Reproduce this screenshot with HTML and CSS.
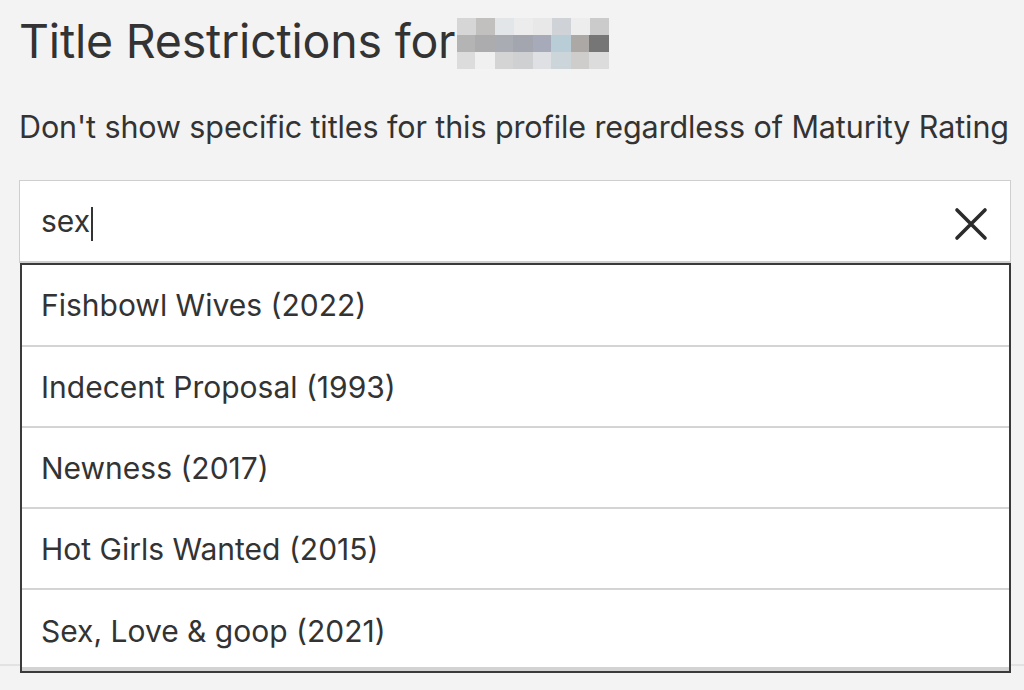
FILE: index.html
```html
<!DOCTYPE html>
<html lang="en">
<head>
    <meta charset="UTF-8">
    <meta name="viewport" content="width=device-width, initial-scale=1.0">
    <title>Title Restrictions</title>
    <link rel="stylesheet" href="styles.css">
</head>
<body>
    <div class="page">
        <h1 class="title">Title Restrictions for <span class="blurred" aria-label="profile name"><i></i><i></i><i></i><i></i><i></i><i></i><i></i><i></i></span></h1>
        <p class="subtitle">Don't show specific titles for this profile regardless of Maturity Rating</p>

        <div class="search">
            <div class="search-box">
                <span class="query">sex</span><span class="caret"></span>
                <button class="clear" aria-label="Clear">
                    <svg width="34" height="34" viewBox="0 0 34 34">
                        <path d="M3 3 L31 31 M31 3 L3 31" stroke="#2b2b2b" stroke-width="3.6" stroke-linecap="round" fill="none"/>
                    </svg>
                </button>
            </div>
            <ul class="results">
                <li>Fishbowl Wives (2022)</li>
                <li>Indecent Proposal (1993)</li>
                <li>Newness (2017)</li>
                <li>Hot Girls Wanted (2015)</li>
                <li>Sex, Love &amp; goop (2021)</li>
            </ul>
        </div>
        <div class="rule"></div>
    </div>
</body>
</html>
```

FILE: styles.css
```css
* {
    margin: 0;
    padding: 0;
    box-sizing: border-box;
}

body {
    font-family: 'Inter', 'Roboto', sans-serif;
    background-color: #f3f3f3;
    color: #333;
}

.page {
    position: relative;
    padding: 12px 0 0 19px;
    width: 1011px;
}

.title {
    font-size: 46.5px;
    font-weight: 400;
    letter-spacing: -0.2px;
    line-height: 58px;
    display: flex;
    align-items: center;
    white-space: nowrap;
}

.blurred {
    display: inline-grid;
    grid-template-columns: repeat(8, 19px);
    grid-template-rows: repeat(3, 17px);
    margin-left: 2px;
    margin-top: 4px;
}

.blurred i:nth-child(1) { background: #d6d6d6; }
.blurred i:nth-child(2) { background: #c2c0bf; }
.blurred i:nth-child(3) { background: #e3e6e9; }
.blurred i:nth-child(4) { background: #ececed; }
.blurred i:nth-child(5) { background: #e8e8e8; }
.blurred i:nth-child(6) { background: #cfd3d7; }
.blurred i:nth-child(7) { background: #ededed; }
.blurred i:nth-child(8) { background: #cccbcb; }

.blurred::before,
.blurred::after {
    content: '';
    grid-column: 1 / -1;
    height: 17px;
}

.blurred::before {
    background: linear-gradient(90deg, #b4b4b4 0 12%, #acacae 12% 25%, #a9adb3 25% 37%, #a3a6ae 37% 50%, #a7aab8 50% 62%, #b9cdd6 62% 75%, #aba8a6 75% 87%, #777676 87% 100%);
    order: 2;
}

.blurred i { order: 1; }

.blurred::after {
    background: linear-gradient(90deg, #dcdcdc 0 12%, #f0f0f0 12% 25%, #d4d4d4 25% 37%, #cfd0d2 37% 50%, #dfe0e4 50% 62%, #ccd6da 62% 75%, #cfcdcb 75% 87%, #dcdcdc 87% 100%);
    order: 3;
}

.subtitle {
    margin-top: 38px;
    font-size: 30.5px;
    letter-spacing: -0.1px;
    line-height: 38px;
    white-space: nowrap;
}

.search {
    margin-top: 34px;
    width: 992px;
}

.search-box {
    height: 83px;
    background-color: #fff;
    border: 1px solid #cfcfcf;
    border-bottom: 2px solid #cfcfcf;
    display: flex;
    align-items: center;
    padding-left: 21px;
    padding-right: 22px;
    font-size: 30px;
}

.caret {
    display: inline-block;
    width: 1.5px;
    height: 34px;
    background-color: #333;
    margin-left: 1px;
    margin-top: 6px;
}

.clear {
    margin-left: auto;
    background: none;
    border: none;
    display: flex;
    margin-top: 6px;
    cursor: pointer;
}

.results {
    list-style: none;
    background-color: #fff;
    border: 2px solid #3a3a3a;
    margin-left: 1px;
    width: 991px;
    position: relative;
    z-index: 1;
    box-shadow: inset 0 -4px 0 #d3d3d3;
}

.results li {
    height: 81px;
    display: flex;
    align-items: center;
    padding-left: 19px;
    font-size: 30px;
    border-bottom: 2px solid #d4d4d4;
}

.results li:first-child {
    height: 82px;
}

.results li:last-child {
    border-bottom: none;
}

.rule {
    position: absolute;
    left: 0;
    right: -13px;
    top: 664px;
    height: 2px;
    background-color: #e2e2e2;
}
```
